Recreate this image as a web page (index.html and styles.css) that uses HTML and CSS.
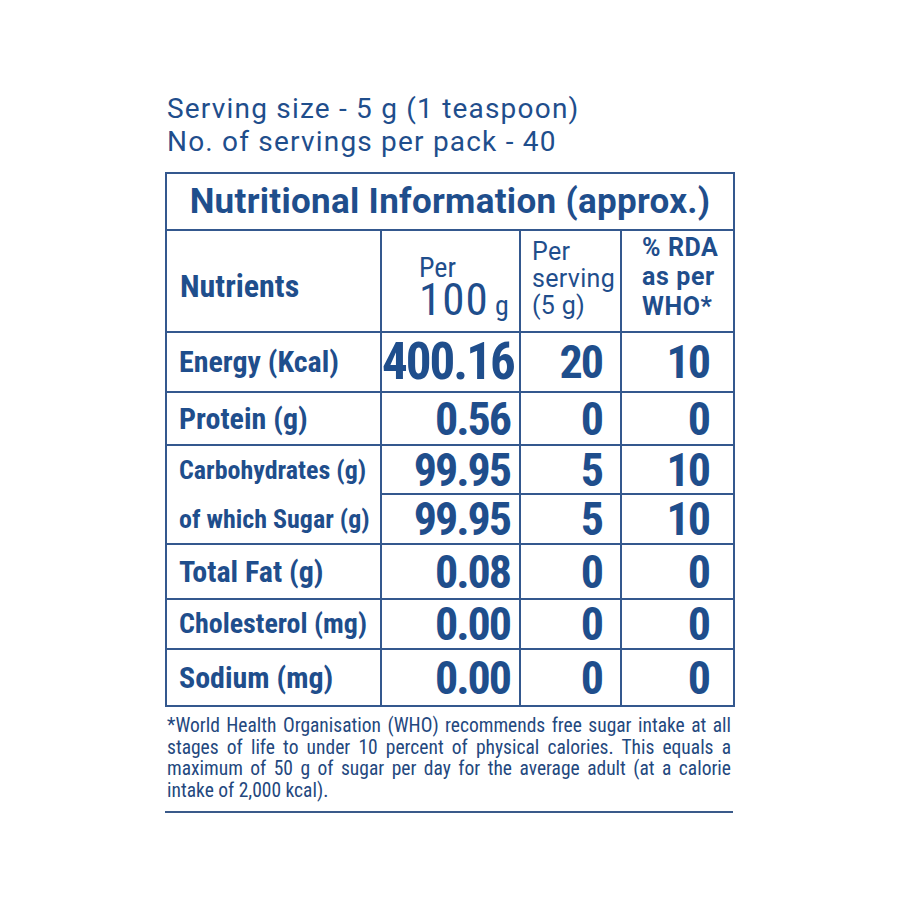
FILE: index.html
```html
<!DOCTYPE html>
<html lang="en">
<head>
<meta charset="utf-8">
<title>Nutritional Information</title>
<link rel="stylesheet" href="styles.css">
</head>
<body>
<div class="label">
  <div class="serving">
    <p>Serving size - 5 g (1 teaspoon)</p>
    <p>No. of servings per pack - 40</p>
  </div>
  <table class="facts">
    <colgroup>
      <col class="col1"><col class="col2"><col class="col3"><col class="col4">
    </colgroup>
    <tr class="r-title"><th colspan="4" class="title">Nutritional Information (approx.)</th></tr>
    <tr class="r-head">
      <th class="h-nut">Nutrients</th>
      <th class="h-100"><span class="stack"><span class="per">Per</span><span class="hundred">100<small> g</small></span></span></th>
      <th class="h-serv">Per<br>serving<br>(5 g)</th>
      <th class="h-rda">% RDA<br>as per<br>WHO*</th>
    </tr>
    <tr class="r-energy"><td class="name">Energy (Kcal)</td><td class="num big">400.16</td><td class="num c3">20</td><td class="num c4">10</td></tr>
    <tr class="r-protein"><td class="name">Protein (g)</td><td class="num">0.56</td><td class="num c3">0</td><td class="num c4">0</td></tr>
    <tr class="r-carb"><td class="name sm joined-top">Carbohydrates (g)</td><td class="num">99.95</td><td class="num c3">5</td><td class="num c4">10</td></tr>
    <tr class="r-sugar"><td class="name sm joined-bottom">of which Sugar (g)</td><td class="num">99.95</td><td class="num c3">5</td><td class="num c4">10</td></tr>
    <tr class="r-fat"><td class="name">Total Fat (g)</td><td class="num">0.08</td><td class="num c3">0</td><td class="num c4">0</td></tr>
    <tr class="r-chol"><td class="name md">Cholesterol (mg)</td><td class="num">0.00</td><td class="num c3">0</td><td class="num c4">0</td></tr>
    <tr class="r-sod"><td class="name">Sodium (mg)</td><td class="num">0.00</td><td class="num c3">0</td><td class="num c4">0</td></tr>
  </table>
  <p class="note">
    <span class="line">*World Health Organisation (WHO) recommends free sugar intake at all</span>
    <span class="line">stages of life to under 10 percent of physical calories. This equals a</span>
    <span class="line">maximum of 50 g of sugar per day for the average adult (at a calorie</span>
    <span class="line last">intake of 2,000 kcal).</span>
  </p>
  <div class="rule"></div>
</div>
</body>
</html>
```

FILE: styles.css
```css
html, body {
  margin: 0;
  padding: 0;
  background: #ffffff;
}
body {
  color: #1f4e8c;
  font-family: Roboto, "Open Sans", sans-serif;
}
.label {
  width: 568px;
  margin-left: 165px;
  padding-top: 92px;
}
.serving p {
  margin: 0;
  font-family: Roboto, "Open Sans", sans-serif;
  font-size: 28px;
  line-height: 33px;
  letter-spacing: 1.2px;
  padding-left: 2px;
}
.serving {
  margin-bottom: 14px;
}
.facts {
  width: 568px;
  border-collapse: collapse;
  table-layout: fixed;
  font-family: Roboto, "Open Sans", sans-serif;
  font-stretch: 75%;
}
.col1 { width: 215px; }
.col2 { width: 139px; }
.col3 { width: 101px; }
.col4 { width: 113px; }
.facts th, .facts td {
  border: 2px solid #34588e;
  padding: 0;
  vertical-align: middle;
  white-space: nowrap;
}
.r-title { height: 57px; }
.title {
  font-size: 35px;
  line-height: 40px;
  font-weight: 700;
  font-stretch: 100%;
  letter-spacing: 0.3px;
  text-align: center;
}
.r-head { height: 102px; }
.h-nut {
  text-align: left;
  padding: 10px 0 0 13px !important;
  font-size: 32px;
  line-height: 36px;
  font-weight: 700;
}
.h-100 {
  text-align: right;
  padding: 10px 6px 0 0 !important;
  font-weight: 400;
}
.stack {
  display: inline-flex;
  flex-direction: column;
  text-align: left;
  min-width: 94px;
}
.per {
  font-size: 28px;
  line-height: 34px;
  font-stretch: 85%;
  padding-top: 5px;
}
.hundred {
  font-size: 45px;
  line-height: 40px;
  font-weight: 400;
  letter-spacing: 1px;
  margin-top: -5px;
}
.hundred small { font-size: 28px; letter-spacing: 0; }
.h-serv {
  text-align: left;
  padding: 0 0 6px 11px !important;
  font-size: 25px;
  line-height: 27px;
  font-weight: 400;
  font-stretch: 100%;
  letter-spacing: 0.3px;
}
.h-rda {
  text-align: left;
  padding: 0 0 8px 20px !important;
  font-size: 25px;
  line-height: 29.5px;
  font-weight: 700;
  font-stretch: 100%;
  letter-spacing: 0.6px;
}
.r-energy { height: 60px; }
.r-protein { height: 53px; }
.r-carb { height: 49px; }
.r-sugar { height: 50px; }
.r-fat { height: 55px; }
.r-chol { height: 50px; }
.r-sod { height: 57px; }
.name {
  font-size: 30px;
  line-height: 34px;
  font-weight: 700;
  font-stretch: 85%;
  padding-left: 12px !important;
}
.name.sm { font-size: 26px; }
.name.md { font-size: 28px; }
.facts td.joined-top { border-bottom-style: hidden; }
.facts td.joined-bottom { border-top-style: hidden; }
.num {
  text-align: right;
  font-size: 46px;
  line-height: 44px;
  font-weight: 700;
  letter-spacing: -2px;
  padding-right: 9px !important;
}
.num.big { font-size: 51px; }
.num.c3 { padding-right: 18px !important; }
.num.c4 { padding-right: 24px !important; }
.note {
  margin: 8px 0 0;
  padding: 0 2px;
  font-family: Roboto, "Open Sans", sans-serif;
  font-stretch: 75%;
  font-size: 19.5px;
  line-height: 21.5px;
  color: #24487e;
}
.note .line {
  display: block;
  white-space: nowrap;
  text-align: justify;
  text-align-last: justify;
}
.note .line.last {
  text-align: left;
  text-align-last: left;
}
.rule {
  margin-top: 10px;
  height: 2px;
  background: #3a5a8a;
}
```
